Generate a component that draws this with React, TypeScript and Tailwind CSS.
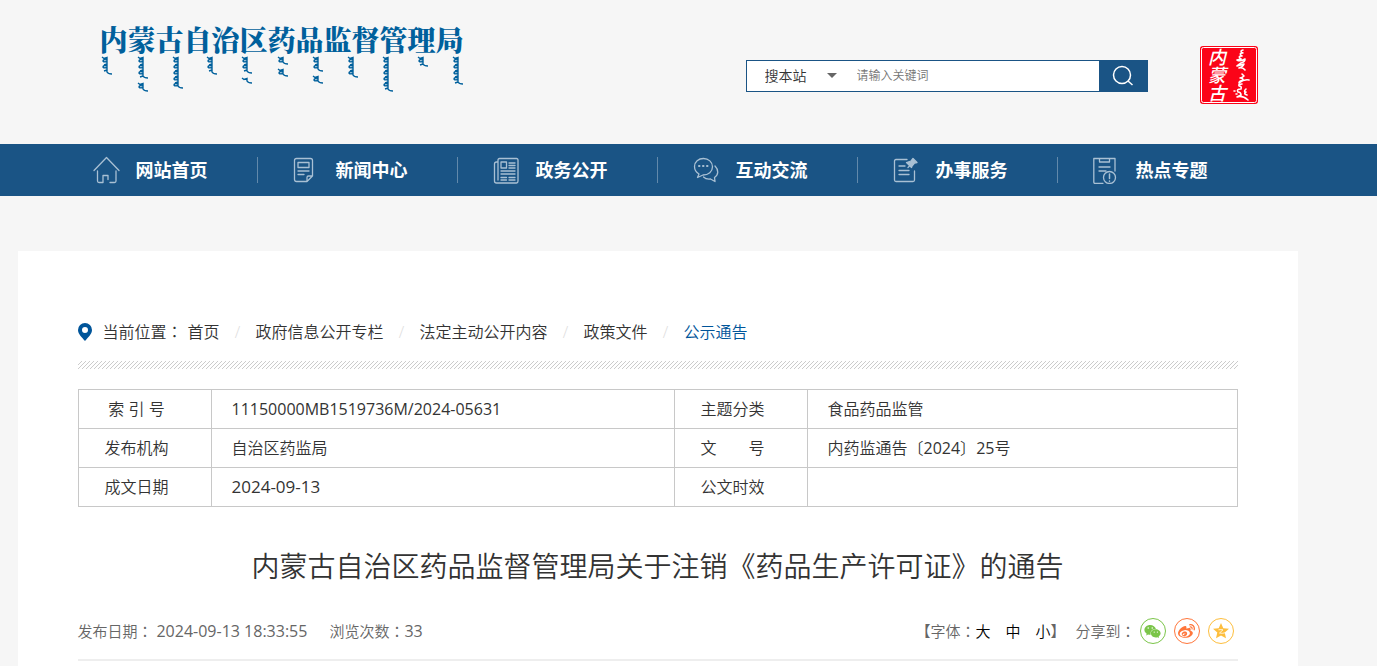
import type { ReactNode } from "react";
import { FaWeibo, FaWeixin } from "react-icons/fa";

// Each stroke group is [x, top, bottom] of one vertical word
const scriptWords: [number, number, number][] = [
  [7, 2, 19],
  [43, 2, 23],
  [43, 28, 36],
  [78, 2, 33],
  [112, 2, 19],
  [147, 2, 18],
  [147, 23, 28],
  [183, 2, 9],
  [183, 14, 21],
  [218, 2, 16],
  [218, 21, 28],
  [253, 2, 22],
  [288, 2, 36],
  [323, 2, 11],
  [358, 2, 29],
];

const wordPath = (x: number, top: number, bottom: number) => {
  let d = `M${x - 5} ${top}l2 1.500l3 -1V${bottom - 2}q1 2 5 2`;
  let wide = true;
  for (let y = top + 4; y < bottom - 1; y += 3) {
    d += wide ? `M${x} ${y - 1}q-4 -1 -4 1q1 1.500 4 .5` : `M${x} ${y}l-3 1`;
    wide = !wide;
  }
  return d;
};

const Colon = () => (
  <span className="font-['Noto_Sans_CJK_TC',sans-serif]">：</span>
);

const NavIcon = ({ children }: { children: ReactNode }) => (
  <svg
    width="28"
    height="28"
    viewBox="0 0 28 28"
    fill="none"
    stroke="#a9c0d4"
    strokeWidth="1.3"
    strokeLinecap="round"
    strokeLinejoin="round"
    className="shrink-0"
    aria-hidden="true"
  >
    {children}
  </svg>
);

const navItems = [
  {
    label: "网站首页",
    icon: (
      <NavIcon>
        <path d="M1 14.5L13.5 1.5L26 14.5M4.5 15v10q0 1.5 1.500 1.500h4v-7h5v4M17 26.500h4.500q1.500 0 1.500-1.500V15" />
      </NavIcon>
    ),
  },
  {
    label: "新闻中心",
    icon: (
      <NavIcon>
        <path d="M14 25.500H3.500q-2 0-2-2V4.500q0-2 2-2h14q2 0 2 2V20L14 25.500V21.500q0-1.500 1.500-1.500h4M5 6.500h11v5H5zM5 15h11M5 18.500h6" />
      </NavIcon>
    ),
  },
  {
    label: "政务公开",
    icon: (
      <NavIcon>
        <path d="M5 6H3.500Q1.500 6 1.500 8v17q0 2 2 2h20q1.500 0 1.500-2V4q0-1.500-1.500-1.500h-17Q5 2.500 5 4v20" />
        <path d="M8 6h5.500v6H8zM16 7h6M16 9.500h6M16 12h6M8 15h14M8 18h14M8 21.500h5.500M16 21.500h6M8 24h5.500M16 24h6" />
      </NavIcon>
    ),
  },
  {
    label: "互动交流",
    icon: (
      <NavIcon>
        <path d="M6 18l-1.500 3.500L10 19c5.500 0 9.500-3.500 9.500-8.200S15.500 2.500 10.500 2.500 1.500 6 1.500 10.500C1.500 14 3.500 16.500 6 18zM22 10c4 4 3.500 9-.5 11.500l.5 4L17.500 23c-4 .5-6-1-7-2" />
        <path d="M6 10h.5M10 10h.5M14 10h.5" strokeWidth="2" />
      </NavIcon>
    ),
  },
  {
    label: "办事服务",
    icon: (
      <NavIcon>
        <path d="M14 3.500H3Q1.500 3.500 1.500 5v19q0 1.500 1.500 1.500h17q1.500 0 1.500-1.500V15M6 10h6M6 14.500h10M6 18.500h10" />
        <path d="M20 2.500l4 4-2.500.5-2.500 3-.5 1.500-5-5 4.500-1.500z" fill="#a9c0d4" />
        <path d="M18 8.500L15 11.500" />
      </NavIcon>
    ),
  },
  {
    label: "热点专题",
    icon: (
      <NavIcon>
        <path d="M10 27.300H2Q.8 27.300.8 26V2.500H22V15M6.500 2.500v3.500h10V2.500M6 11h11M6 15h7" />
        <circle cx="16.500" cy="21.500" r="6" />
        <path d="M16.500 18v4.500M16.500 25v.2" strokeWidth="1.500" />
      </NavIcon>
    ),
  },
];

const crumbs = ["首页", "政府信息公开专栏", "法定主动公开内容", "政策文件", "公示通告"];

const SiteLogo = () => (
  <a href="#" className="block text-[#00609c]">
    <span className="block whitespace-nowrap text-[28px] leading-8 font-black font-['Noto_Serif_CJK_SC','Noto_Sans_CJK_SC',serif]">
      内蒙古自治区药品监督管理局
    </span>
    <svg width="366" height="40" viewBox="0 0 366 40" aria-hidden="true">
      {scriptWords.map(([x, top, bottom]) => (
        <path
          key={`${x}-${top}`}
          d={wordPath(x, top, bottom)}
          fill="none"
          stroke="currentColor"
          strokeWidth="1.4"
        />
      ))}
    </svg>
  </a>
);

const Seal = () => (
  <svg width="58" height="58" viewBox="0 0 58 58" aria-hidden="true">
    <rect width="58" height="58" rx="3" fill="#fb0418" />
    <rect x="1.500" y="1.500" width="55" height="55" rx="2" fill="none" stroke="#fff" strokeWidth="1" />
    <text
      x="17"
      y="2"
      fill="#fff"
      fontSize="18"
      className="italic font-medium font-['Noto_Sans_CJK_SC',sans-serif] [writing-mode:vertical-rl]"
    >
      内蒙古
    </text>
    <g fill="none" stroke="#fff" strokeWidth="1.600" strokeLinecap="round" strokeLinejoin="round">
      <path d="M43 4q-4 1 0 3q-5 0-1 3q-5 0-1 3l-4 1q3 2 8-1q0 3-4 4l-4 3q4-1 7-2q-1 3-5 4q4-1 6 2" />
      <path d="M42 28l2 2q-2 2-4 2q3 0 3 2q-4 1-4 3q5-4 10-3M42 38q-4 0-3 2q3 0 2 3q-5 0-3 3q3 0 3 3l-4 2q5-2 11 3M34 45h1M36 48h1M46 43q-3 3 0 3q-3 2 1 3" />
    </g>
  </svg>
);

const SearchBar = () => (
  <form className="flex h-8 w-[402px] border border-[#1a5485] bg-white">
    <div className="relative w-[98px]">
      <select
        aria-label="搜索范围"
        className="h-full w-full appearance-none bg-transparent pl-[18px] text-sm text-[#333] outline-none"
      >
        <option>搜本站</option>
      </select>
      <span className="pointer-events-none absolute top-3 right-2 border-x-[5px] border-t-[5px] border-x-transparent border-t-[#666]" />
    </div>
    <input
      type="text"
      aria-label="关键词"
      placeholder="请输入关键词"
      className="min-w-0 flex-1 pl-3 text-xs outline-none placeholder:text-[#757575]"
    />
    <button type="button" aria-label="搜索" className="flex w-12 items-center justify-center bg-[#1a5485]">
      <svg width="22" height="22" viewBox="0 0 22 22" fill="none" stroke="#fff" strokeWidth="1.500">
        <circle cx="10" cy="10" r="8.500" />
        <path d="M16 16l4.500 4" />
      </svg>
    </button>
  </form>
);

const HatchedRule = () => (
  <svg className="mt-[17px] block h-2 w-full" aria-hidden="true">
    <defs>
      <pattern id="hatch" width="4" height="4" patternUnits="userSpaceOnUse">
        <path d="M-1 1L1-1M0 4L4 0M3 5L5 3" stroke="#ccc" strokeWidth="1" />
      </pattern>
    </defs>
    <rect width="100%" height="8" fill="url(#hatch)" />
  </svg>
);

const LabelCell = ({ children }: { children: ReactNode }) => (
  <th className="border border-[#c8c8c8] pr-4 text-center font-[350] whitespace-pre">{children}</th>
);

const ValueCell = ({ children }: { children?: ReactNode }) => (
  <td className="border border-[#c8c8c8] pl-5">{children}</td>
);

const InfoTable = () => (
  <table className="mt-5 w-full table-fixed border-collapse text-base text-[#333]">
    <colgroup>
      <col className="w-[133px]" />
      <col className="w-[463px]" />
      <col className="w-[133px]" />
      <col />
    </colgroup>
    <tbody>
      <tr className="h-[39px]">
        <LabelCell>索 引 号</LabelCell>
        <ValueCell>
          <span className="font-normal">11150000MB1519736M/2024-05631</span>
        </ValueCell>
        <LabelCell>主题分类</LabelCell>
        <ValueCell>食品药品监管</ValueCell>
      </tr>
      <tr className="h-[39px]">
        <LabelCell>发布机构</LabelCell>
        <ValueCell>自治区药监局</ValueCell>
        <LabelCell>文　　号</LabelCell>
        <ValueCell>
          内药监通告〔<span className="font-normal">2024</span>〕<span className="font-normal">25</span>号
        </ValueCell>
      </tr>
      <tr className="h-[39px]">
        <LabelCell>成文日期</LabelCell>
        <ValueCell>
          <span className="text-[17px] font-normal">2024-09-13</span>
        </ValueCell>
        <LabelCell>公文时效</LabelCell>
        <ValueCell />
      </tr>
    </tbody>
  </table>
);

const ArticleMeta = () => (
  <div className="mt-8 flex items-center justify-between border-b-2 border-[#eee] pb-[15px] text-[15px] text-[#666]">
    <div className="flex gap-[22px]">
      <span>
        发布日期
        <Colon /> <span className="text-base font-normal">2024-09-13 18:33:55</span>
      </span>
      <span>
        浏览次数
        <Colon />
        <span className="text-base font-normal">33</span>
      </span>
    </div>
    <div className="flex items-center">
      <span>【字体</span>
      <Colon />
      <div className="flex gap-[15px] text-black">
        <button type="button">大</button>
        <button type="button">中</button>
        <button type="button">小</button>
      </div>
      <span>】</span>
      <span className="ml-[10px]">
        分享到
        <Colon />
      </span>
      <div className="mr-1 ml-1 flex gap-2">
        <a
          href="#"
          aria-label="微信"
          className="flex size-[26px] items-center justify-center rounded-full border border-[#7bc549] text-[#7bc549]"
        >
          <FaWeixin size={17} />
        </a>
        <a
          href="#"
          aria-label="微博"
          className="flex size-[26px] items-center justify-center rounded-full border border-[#ff763b] text-[#ff763b]"
        >
          <FaWeibo size={17} />
        </a>
        <a
          href="#"
          aria-label="QQ空间"
          className="flex size-[26px] items-center justify-center rounded-full border border-[#fdbe3d] text-[#fdbe3d]"
        >
          <svg width="18" height="18" viewBox="0 0 18 18">
            <path
              d="M9 1l2.300 5.200 5.700.6-4.300 3.800L14 16.300 9 13.500l-5 2.800 1.300-5.700L1 6.800l5.700-.6z"
              fill="currentColor"
            />
            <path d="M6.500 7.800q2.500-.4 4.500 0L7.500 11q3 .7 5.500-.2" fill="none" stroke="#fff" strokeWidth=".8" />
          </svg>
        </a>
      </div>
    </div>
  </div>
);

const App = () => {
  return (
    <div className="flex min-h-screen flex-col bg-[#f6f6f6] font-['Open_Sans','Noto_Sans_CJK_SC',sans-serif] font-[350]">
      {/* Header */}
      <header className="h-36 pr-[62px]">
        <div className="mx-auto flex max-w-[1200px] items-start justify-between">
          <div className="pt-[23px] pl-[42px]">
            <SiteLogo />
          </div>
          <div className="flex items-start gap-[52px]">
            <div className="pt-[60px]">
              <SearchBar />
            </div>
            <div className="pt-[46px]">
              <Seal />
            </div>
          </div>
        </div>
      </header>

      {/* Main navigation */}
      <nav className="bg-[#1a5485] pr-[62px]">
        <ul className="mx-auto grid h-[52px] max-w-[1200px] grid-cols-6 items-center">
          {navItems.map((item) => (
            <li key={item.label} className="border-r border-[#6289ab] last:border-r-0">
              <a
                href="#"
                className="flex h-[26px] items-center gap-[15px] pl-[35px] text-lg font-bold whitespace-nowrap text-white"
              >
                {item.icon}
                {item.label}
              </a>
            </li>
          ))}
        </ul>
      </nav>

      <div className="flex flex-1 pt-[55px] pr-[62px]">
        <main className="mx-auto w-full max-w-[1280px] bg-white px-[60px] pt-[68px]">
          {/* Breadcrumb */}
          <div className="flex items-center text-base text-[#333]">
            <svg width="14" height="18" viewBox="0 0 14 18" aria-hidden="true">
              <path
                d="M7 0a7 7 0 0 0-7 7c0 4 4 7.500 7 11 3-3.500 7-7 7-11a7 7 0 0 0-7-7zm0 4a3 3 0 1 1 0 6 3 3 0 0 1 0-6z"
                fill="#00559a"
              />
            </svg>
            <span className="ml-[11px]">
              当前位置
              <Colon />
            </span>
            <ol className="ml-[5px] flex">
              {crumbs.map((crumb, i) => (
                <li key={crumb} className="flex">
                  {i > 0 && <span className="w-9 text-center text-[#ddd]">/</span>}
                  <a href="#" className={i === crumbs.length - 1 ? "text-[#00559a]" : ""}>
                    {crumb}
                  </a>
                </li>
              ))}
            </ol>
          </div>

          <HatchedRule />

          <InfoTable />

          <h1 className="mt-[39px] text-center text-[28px] leading-10 font-[350] text-[#333]">
            内蒙古自治区药品监督管理局关于注销《药品生产许可证》的通告
          </h1>

          <ArticleMeta />
        </main>
      </div>
    </div>
  );
};

export default App;
